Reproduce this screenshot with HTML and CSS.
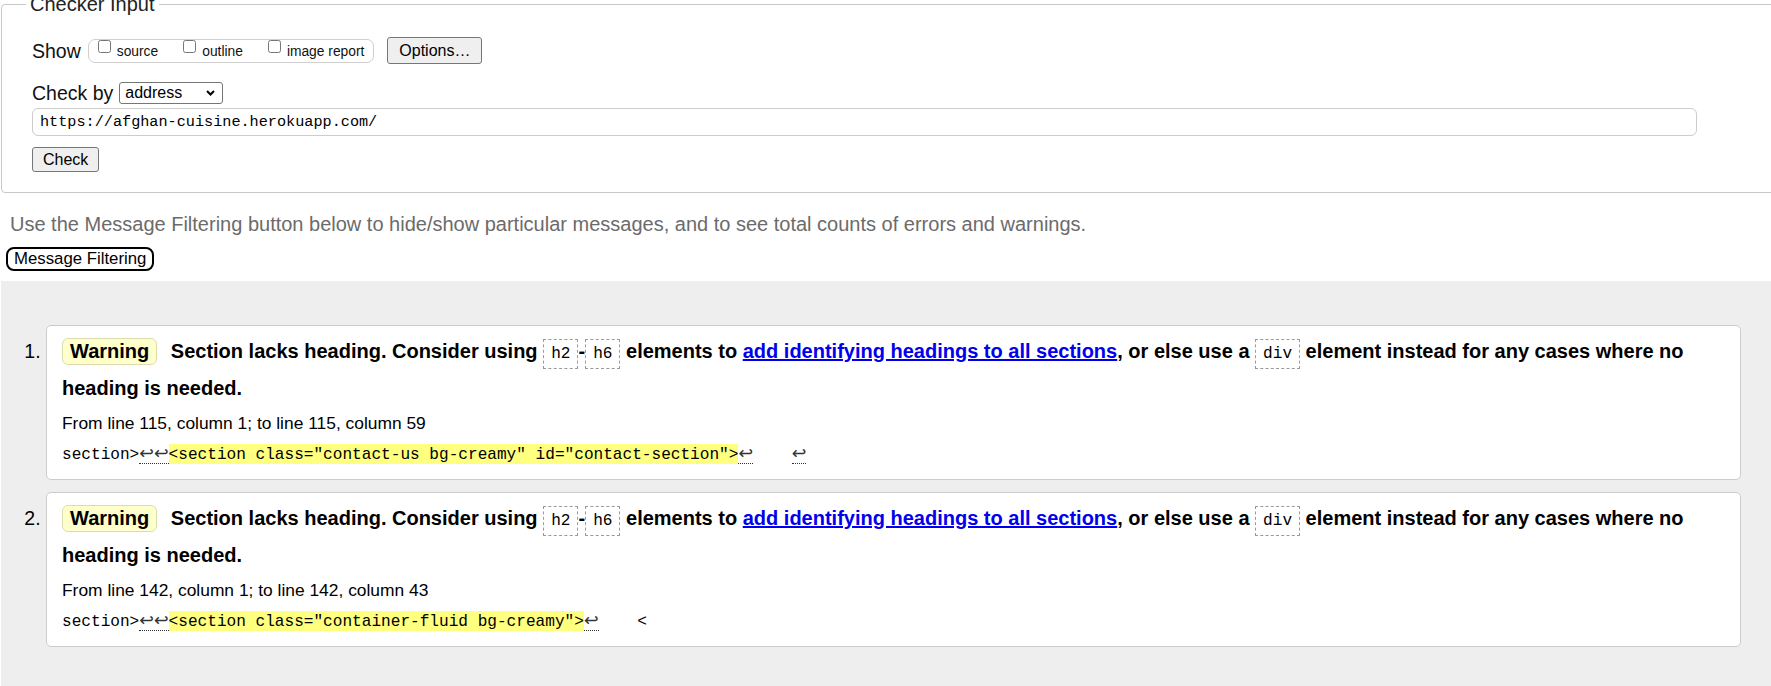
FILE: index.html
```html
<!DOCTYPE html>
<html lang="en">
<head>
<meta charset="utf-8">
<title>Nu Html Checker</title>
<link rel="stylesheet" href="styles.css">
</head>
<body>
<form class="checker">
  <fieldset class="input-box">
    <legend>Checker Input</legend>
    <div class="row row-show">
      <span class="lbl lbl-show">Show</span>
      <div class="opts">
        <label class="opt"><input type="checkbox"><span>source</span></label>
        <label class="opt"><input type="checkbox"><span>outline</span></label>
        <label class="opt"><input type="checkbox"><span>image report</span></label>
      </div>
      <button type="button" class="btn btn-options">Options…</button>
    </div>
    <div class="row row-by">
      <span class="lbl lbl-by">Check by</span>
      <span class="select">address<svg width="9" height="6" viewBox="0 0 9 6"><path d="M1 1l3.5 3.5L8 1" fill="none" stroke="#000" stroke-width="2"/></svg></span>
    </div>
    <input class="url" type="text" value="https://afghan-cuisine.herokuapp.com/">
    <button type="button" class="btn btn-check">Check</button>
  </fieldset>
</form>
<p class="hint">Use the Message Filtering button below to hide/show particular messages, and to see total counts of errors and warnings.</p>
<button type="button" class="filter-btn">Message Filtering</button>
<div class="results">
  <ol class="messages">
    <li class="card">
      <p class="msg"><strong class="badge">Warning</strong> <span>Section lacks heading. Consider using <code class="el">h2</code>-<code class="el">h6</code> elements to <a href="#">add identifying headings to all sections</a>, or else use a <code class="el">div</code> element instead for any cases where no heading is needed.</span></p>
      <p class="loc">From line 115, column 1; to line 115, column 59</p>
      <p class="extract">section&gt;<span class="lf">↩↩</span><mark>&lt;section class="contact-us bg-creamy" id="contact-section"&gt;</mark><span class="lf">↩</span>    <span class="lf">↩</span></p>
    </li>
    <li class="card">
      <p class="msg"><strong class="badge">Warning</strong> <span>Section lacks heading. Consider using <code class="el">h2</code>-<code class="el">h6</code> elements to <a href="#">add identifying headings to all sections</a>, or else use a <code class="el">div</code> element instead for any cases where no heading is needed.</span></p>
      <p class="loc">From line 142, column 1; to line 142, column 43</p>
      <p class="extract">section&gt;<span class="lf">↩↩</span><mark>&lt;section class="container-fluid bg-creamy"&gt;</mark><span class="lf">↩</span>    &lt;</p>
    </li>
  </ol>
</div>
</body>
</html>
```

FILE: styles.css
```css
html, body {
  margin: 0;
  padding: 0;
  background: #fff;
  overflow: hidden;
}

body {
  width: 1771px;
  height: 686px;
  font-family: "Liberation Sans", Arial, sans-serif;
  color: #000;
}

.checker {
  margin: -7px 0 0 0;
}

.input-box {
  margin: 0 -10px 0 1px;
  padding: 21px 0 20px 30px;
  border: 1px solid #c8c8c8;
  border-radius: 4px;
  min-inline-size: auto;
}

.input-box legend {
  font-size: 20px;
  line-height: 23px;
  padding: 0 4px;
  margin-left: -6px;
  color: #222;
}

.row {
  display: flex;
  align-items: center;
}

.row-show {
  height: 27px;
}

.row-by {
  height: 22px;
  margin-top: 18px;
}

.lbl {
  font-size: 19.5px;
  line-height: 22px;
  color: #111;
}

.lbl-show {
  margin-right: 7px;
}

.lbl-by {
  margin-right: 6px;
}

.opts {
  display: flex;
  align-items: flex-start;
  box-sizing: border-box;
  height: 24px;
  border: 1px solid #cfcfcf;
  border-radius: 7px;
  padding: 0 9px 0 9px;
  margin-right: 13px;
}

.opt {
  display: flex;
  align-items: flex-start;
  margin-right: 25px;
}

.opt:last-child {
  margin-right: 0;
}

.opt input {
  width: 13px;
  height: 13px;
  margin: 0;
}

.opt span {
  font-size: 13.8px;
  line-height: 16px;
  margin: 4px 0 0 6px;
  color: #111;
}

.btn {
  font-family: "Liberation Sans", Arial, sans-serif;
  color: #000;
  background: #efefef;
  border: 1px solid #767676;
  border-radius: 3px;
  box-sizing: border-box;
}

.btn-options {
  height: 27px;
  padding: 0 11px;
  font-size: 16px;
}

.select {
  display: inline-flex;
  align-items: center;
  justify-content: space-between;
  box-sizing: border-box;
  width: 104px;
  height: 22px;
  border: 1px solid #767676;
  border-radius: 3px;
  padding: 0 7px 0 5px;
  font-size: 16px;
  background: #fff;
}

.url {
  display: block;
  box-sizing: border-box;
  margin: 4px 0 0 0;
  width: 1665px;
  height: 28px;
  border: 1px solid #cccccc;
  border-radius: 6px;
  padding: 0 7px;
  font-family: "Liberation Mono", "Courier New", monospace;
  font-size: 15.2px;
  color: #000;
  background: #fff;
}

.btn-check {
  display: block;
  margin-top: 11px;
  height: 25px;
  padding: 0 10px;
  font-size: 16px;
}

.hint {
  margin: 20px 0 0 10px;
  font-size: 20px;
  line-height: 23px;
  color: #6b6b6b;
}

.filter-btn {
  display: block;
  margin: 11px 0 0 6px;
  height: 24px;
  box-sizing: border-box;
  padding: 0 6px;
  border: 2px solid #000;
  border-radius: 8px;
  background: #fff;
  color: #000;
  font-family: "Liberation Sans", Arial, sans-serif;
  font-size: 16.8px;
}

.results {
  margin: 10px 0 0 1px;
  background: #eeeeee;
  padding: 44px 0 80px 0;
}

.messages {
  margin: 0;
  padding: 0 0 0 45px;
  list-style: decimal outside;
  font-size: 19.5px;
}

.card {
  background: #fff;
  border: 1px solid #cccccc;
  border-radius: 5px;
  margin: 0 30px 12px 0;
  padding: 7px 15px 13px 15px;
}

.card::marker {
  font-family: "Liberation Sans", Arial, sans-serif;
  font-size: 19.5px;
}

.msg {
  margin: 0;
  font-size: 20px;
  font-weight: bold;
  line-height: 37px;
}

.badge {
  display: inline-block;
  line-height: 21px;
  padding: 2px 7px;
  border: 1px solid #dcdcae;
  border-radius: 6px;
  background: #ffffcc;
  margin-right: 8px;
}

.el {
  display: inline-block;
  font-family: "Liberation Mono", "Courier New", monospace;
  font-weight: normal;
  font-size: 16.1px;
  line-height: 18px;
  padding: 5px 7px;
  border: 1px dashed #9a9a9a;
}

.msg a {
  color: #0000ee;
  text-decoration: underline;
}

.loc {
  margin: 6px 0 0 0;
  font-size: 17.4px;
  line-height: 20px;
}

.extract {
  margin: 11px 0 0 0;
  font-family: "Liberation Mono", "Courier New", monospace;
  font-size: 16.1px;
  line-height: 22px;
  white-space: pre;
}

.extract mark {
  background: #ffff80;
  color: #000;
  padding-top: 2px;
}

.lf {
  font-family: "DejaVu Sans", sans-serif;
  font-size: 17.5px;
  line-height: 1;
  color: #333;
  border-bottom: 1px dotted #333;
}
```
